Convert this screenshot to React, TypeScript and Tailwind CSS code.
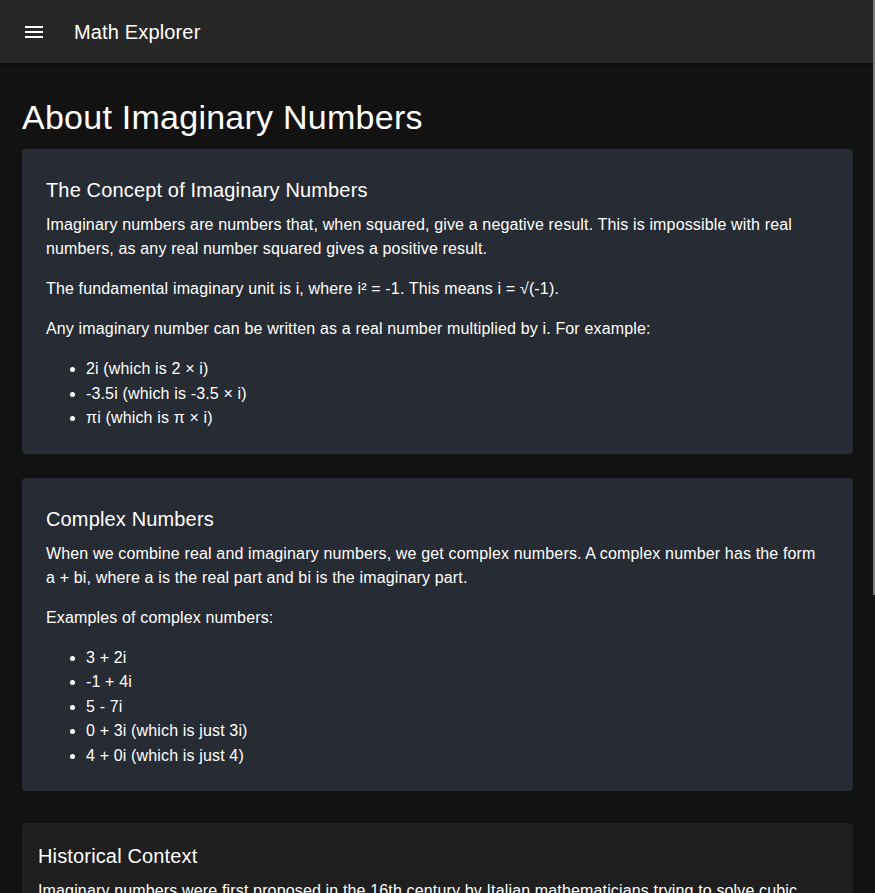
import React from "react";

function MenuIcon() {
  return (
    <svg width="24" height="24" viewBox="0 0 24 24" fill="#ffffff" aria-hidden="true">
      <path d="M3 18h18v-2H3v2zm0-5h18v-2H3v2zm0-7v2h18V6H3z" />
    </svg>
  );
}

export default function App() {
  const font = { fontFamily: '"Liberation Sans", Arial, Helvetica, sans-serif' };
  return (
    <div className="min-h-screen bg-[#121212] text-white" style={font}>
      <header className="h-[63px] bg-[#272727] flex items-center shadow-[0_2px_4px_rgba(0,0,0,0.3)]">
        <div className="ml-[22px] w-[24px] h-[24px] flex items-center justify-center">
          <MenuIcon />
        </div>
        <div className="ml-[28px] text-[20px] leading-[32px] font-medium tracking-[0.15px]">Math Explorer</div>
      </header>

      <main className="px-[22px] pt-[33px] pb-[24px]">
        <h1 className="text-[34px] leading-[42px] font-normal mb-[11px] tracking-[0.25px]">About Imaginary Numbers</h1>

        <section className="bg-[#272b33] rounded-[4px] px-[24px] pt-[25px] pb-[23px] text-[16px] leading-[24px] tracking-[0.15px]">
          <h2 className="text-[20px] leading-[32px] font-normal mb-[7px]">The Concept of Imaginary Numbers</h2>
          <p className="mb-[16px]">
            Imaginary numbers are numbers that, when squared, give a negative result. This is impossible with real numbers, as any real number squared gives a positive result.
          </p>
          <p className="mb-[16px]">The fundamental imaginary unit is i, where i² = -1. This means i = √(-1).</p>
          <p className="mb-[16px]">Any imaginary number can be written as a real number multiplied by i. For example:</p>
          <ul className="list-disc pl-[40px] leading-[24.5px]">
            <li>2i (which is 2 × i)</li>
            <li>-3.5i (which is -3.5 × i)</li>
            <li>πi (which is π × i)</li>
          </ul>
        </section>

        <section className="mt-[24px] bg-[#272b33] rounded-[4px] px-[24px] pt-[25px] pb-[23px] text-[16px] leading-[24px] tracking-[0.15px]">
          <h2 className="text-[20px] leading-[32px] font-normal mb-[7px]">Complex Numbers</h2>
          <p className="mb-[16px]">
            When we combine real and imaginary numbers, we get complex numbers. A complex number has the form a + bi, where a is the real part and bi is the imaginary part.
          </p>
          <p className="mb-[16px]">Examples of complex numbers:</p>
          <ul className="list-disc pl-[40px] leading-[24.5px]">
            <li>3 + 2i</li>
            <li>-1 + 4i</li>
            <li>5 - 7i</li>
            <li>0 + 3i (which is just 3i)</li>
            <li>4 + 0i (which is just 4)</li>
          </ul>
        </section>

        <section className="mt-[32px] bg-[#1f1f1f] rounded-[4px] px-[16px] pt-[17px] pb-[16px] text-[16px] leading-[24px] tracking-[0.15px]">
          <h2 className="text-[20px] leading-[32px] font-normal mb-[7px]">Historical Context</h2>
          <p className="mb-[16px]">
            Imaginary numbers were first proposed in the 16th century by Italian mathematicians trying to solve cubic equations. Gerolamo Cardano and Rafael Bombelli were among the first to work with them.
          </p>
          <p className="mb-[16px]">
            The term “imaginary” was coined by René Descartes in 1637, who used it in a somewhat derogatory sense. Later, mathematicians such as Leonhard Euler and Carl Friedrich Gauss showed how powerful and useful these numbers really are, and today they are a standard part of mathematics.
          </p>
          <p className="mb-[16px]">Today, imaginary and complex numbers are essential in many fields:</p>
          <ul className="list-disc pl-[40px] leading-[24.5px]">
            <li>Electrical engineering (alternating current circuits)</li>
            <li>Quantum mechanics</li>
            <li>Signal processing</li>
            <li>Fluid dynamics</li>
          </ul>
        </section>

        <section className="mt-[32px] bg-[#1f1f1f] rounded-[4px] p-[16px] text-[16px] leading-[24px] tracking-[0.15px]">
          <h2 className="text-[20px] leading-[32px] font-normal mb-[7px]">Visualizing Complex Numbers</h2>
          <p>Complex numbers can be drawn as points on the complex plane, with a real axis and an imaginary axis.</p>
        </section>
      </main>

      <div className="fixed top-0 right-0 w-[2px] h-[595px] bg-[#7a7a7a]" aria-hidden="true" />
    </div>
  );
}
